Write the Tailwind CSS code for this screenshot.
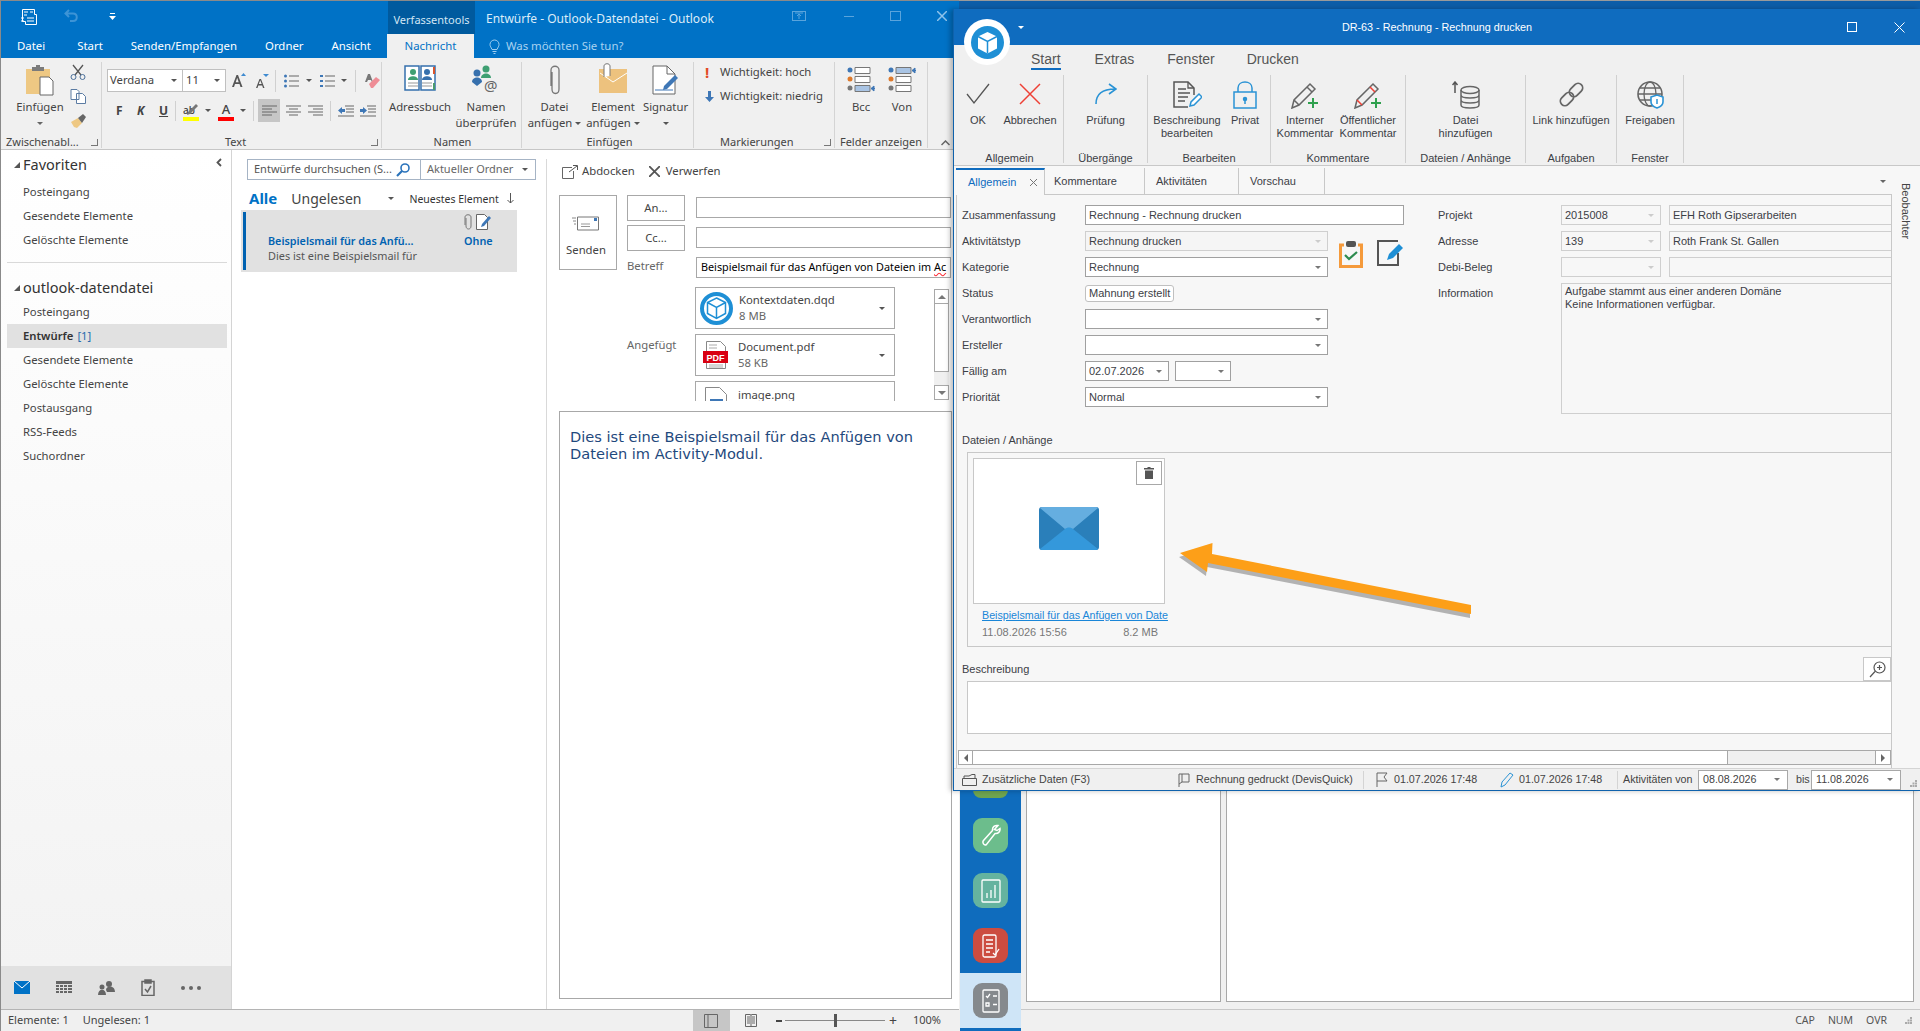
<!DOCTYPE html>
<html lang="de">
<head>
<meta charset="UTF-8">
<title>Entwürfe - Outlook-Datendatei - Outlook</title>
<script src="https://cdn.jsdelivr.net/npm/@tailwindcss/browser@4"></script>
</head>
<body class="bg-[#f0f0f0]">
<div class="relative w-[1920px] h-[1031px] overflow-hidden font-['Noto_Sans',sans-serif]">

<!-- app behind, top edge -->
<div class="absolute left-[955px] top-0 w-[965px] h-[12px] bg-[#0d5da8] border-t border-[#9a9a9a]"></div>

<!-- app behind, lower part -->
<div class="absolute left-[959px] top-[780px] w-[961px] h-[251px] flex bg-[#f0f0f0]">
  <div class="w-[61px] ml-[1px] h-full bg-[#0f6cbd] flex flex-col items-center pt-[18px]">
    <div class="w-[35px] h-[18px] shrink-0 mt-[-18px] mb-[20px] bg-[#6fa54f] rounded-[8px]"></div>
    <div class="w-[35px] h-[35px] shrink-0 rounded-[9px] bg-[#6cbd8c] flex items-center justify-center">
      <svg width="20" height="24" viewBox="0 0 20 24" fill="none" stroke="#fff" stroke-width="1.5"><path d="M17 1.500c-3-.6-6 1.400-5.500 5l-9 10c-1.500 2 .5 5.500 3 4l8.500-11c3 .6 5.500-2 5-5l-3 2-2.500-1z"/></svg>
    </div>
    <div class="w-[35px] h-[35px] shrink-0 mt-[20px] rounded-[9px] bg-[#65b39f] flex items-center justify-center">
      <svg width="20" height="24" viewBox="0 0 20 24" fill="none" stroke="#fff" stroke-width="1.300"><rect x="1" y="1" width="18" height="22" rx="1"/><path d="M6 19v-5M10 19v-8M14 19V6"/></svg>
    </div>
    <div class="w-[35px] h-[35px] shrink-0 mt-[20px] rounded-[9px] bg-[#cc4c40] flex items-center justify-center">
      <svg width="20" height="24" viewBox="0 0 20 24" fill="none" stroke="#fff" stroke-width="1.300"><rect x="2" y="1" width="13" height="22" rx="1.500"/><path d="M5 6h7M5 10h7M5 14h7M5 18h4M12 19l2 2 4-6"/></svg>
    </div>
    <div class="w-[61px] h-[55px] shrink-0 mt-[10px] bg-[#cfe5f7] flex items-center justify-center">
      <div class="w-[35px] h-[35px] rounded-[9px] bg-[#85898d] flex items-center justify-center">
        <svg width="18" height="24" viewBox="0 0 18 24" fill="none" stroke="#fff" stroke-width="1.300"><rect x="1" y="1" width="16" height="22" rx="1"/><path d="M4 7l1.500 1.500L8 5M11 7h4M4 14h3v3H4zM11 15.500h4"/></svg>
      </div>
    </div>
  </div>
  <div class="flex-1 flex flex-col">
    <div class="flex h-[222px] pl-[5px] pr-[6px] gap-[5px]">
      <div class="w-[195px] h-full bg-white border-x border-b border-[#a8a8a8]"></div>
      <div class="flex-1 h-full bg-white border-x border-b border-[#a8a8a8]"></div>
    </div>
    <div class="mt-[7px] flex-1 border-t border-[#c8c8c8] flex items-center justify-end text-[10.500px] text-[#555] pr-[8px] gap-[13px]">
      <span>CAP</span><span>NUM</span><span>OVR</span>
      <svg class="ml-[5px]" width="7" height="7" viewBox="0 0 7 7" fill="#aaa"><path d="M5 0h2v2H5zM2.500 2.500h2v2h-2zM5 2.500h2v2H5zM0 5h2v2H0zM2.500 5h2v2h-2zM5 5h2v2H5z"/></svg>
    </div>
  </div>
</div>

<!-- Outlook window -->
<div class="absolute left-0 top-0 w-[959px] h-[1031px] flex flex-col bg-white border-l border-t border-[#8a8a8a] text-[#444] text-[11.300px]">
  <div class="h-[57px] shrink-0 bg-[#0072c6] text-white flex flex-col">
    <div class="h-[33px] flex items-start">
      <svg class="ml-[19px] mt-[7px]" width="18" height="18" viewBox="0 0 18 18" fill="none" stroke="#fff" stroke-width="1"><path d="M2.500 1.500h12v5h2v10h-11v-3h-3zM4 4h4M4 7h3M10 4h3M7 10h7M7 13h7M1 10h3M1 13h3"/></svg>
      <svg class="ml-[26px] mt-[8px]" width="16" height="14" viewBox="0 0 16 14" fill="none" stroke="#3d94d6" stroke-width="2"><path d="M5 1L1.500 4.500 5 8M2 4.500h7c5 0 5 7.500 0 7.500H6"/></svg>
      <svg class="ml-[29px] mt-[12px]" width="7" height="7" viewBox="0 0 7 7" fill="#fff"><path d="M1 0h5v1H1zM0 3h7L3.500 7z"/></svg>
      <div class="ml-[272px] w-[87px] h-[33px] bg-[#005a9e] text-[#d2e6f5] flex items-center justify-center pt-[5px] whitespace-nowrap text-[11px]">Verfassentools</div>
      <div class="ml-[11px] pt-[9px] text-[12px] text-[#dcecf8] whitespace-nowrap">Entwürfe - Outlook-Datendatei - Outlook</div>
      <div class="ml-auto flex items-start">
        <svg class="mt-[10px]" width="14" height="10" viewBox="0 0 14 10" fill="none" stroke="#5aa4dc"><rect x=".5" y=".5" width="13" height="9"/><path d="M7 8V3M5 5l2-2 2 2M3 2h8"/></svg>
        <div class="ml-[38px] mt-[15px] w-[10px] h-[1px] bg-[#5aa4dc]"></div>
        <div class="ml-[36px] mt-[10px] w-[11px] h-[10px] border border-[#5aa4dc]"></div>
        <svg class="ml-[36px] mr-[12px] mt-[10px]" width="10" height="10" viewBox="0 0 10 10" stroke="#8fc3ea" stroke-width="1.500"><path d="M0 0l10 10M10 0L0 10"/></svg>
      </div>
    </div>
    <div class="h-[24px] flex items-center text-[11.400px] whitespace-nowrap">
      <span class="ml-[16px]">Datei</span>
      <span class="ml-[32px]">Start</span>
      <span class="ml-[28px]">Senden/Empfangen</span>
      <span class="ml-[28px]">Ordner</span>
      <span class="ml-[28px]">Ansicht</span>
      <span class="ml-[16px] w-[87px] h-[24px] bg-[#f0f0f0] text-[#0072c6] flex items-center justify-center">Nachricht</span>
      <svg class="ml-[15px]" width="11" height="15" viewBox="0 0 11 15" fill="none" stroke="#9fcdf0"><path d="M3 10.500C2 8 1 7.500 1 5.500a4.500 4.500 0 019 0c0 2-1 2.500-2 5zM3.500 12.500h4M4.500 14.500h2"/></svg>
      <span class="ml-[6px] text-[#a9d2f1]">Was möchten Sie tun?</span>
    </div>
  </div>

  <!-- ribbon -->
  <div class="h-[92px] shrink-0 bg-[#f0f0f0] border-b border-[#c6c6c6] flex text-[#444] pt-[4px]">
    <div class="w-[101px] h-[86px] border-r border-[#d4d4d4] flex flex-col">
      <div class="h-[74px] flex">
        <div class="w-[62px] ml-[8px] flex flex-col items-center pt-[3px]">
          <svg width="30" height="31" viewBox="0 0 30 31"><rect x="1" y="4" width="24" height="25" fill="#eec883"/><rect x="7" y="2" width="12" height="4" fill="#7b7b7b"/><rect x="11" y="0" width="4" height="3" fill="#7b7b7b"/><path d="M15 12h9l4 4v14H15z" fill="#fff" stroke="#666"/></svg>
          <span class="mt-[3px]">Einfügen</span>
          <span class="mt-[6px] w-0 h-0 border-x-[3px] border-x-transparent border-t-[3px] border-t-[#666]"></span>
        </div>
        <div class="flex flex-col ml-[-1px] pt-[2px] gap-[9px]">
          <svg width="16" height="16" viewBox="0 0 16 16" fill="none" stroke="#4a6f9a"><path d="M3 1l8 10M13 1L5 11" stroke="#555" stroke-width="1.300"/><circle cx="3.500" cy="13" r="2.500"/><circle cx="12.500" cy="13" r="2.500"/></svg>
          <svg width="16" height="15" viewBox="0 0 16 15" fill="#fff" stroke="#5c7ca3"><path d="M1 .5h6l2 2v8H1zM6.500 4.500h6l3 3v7h-9z"/></svg>
          <svg width="17" height="16" viewBox="0 0 17 16"><path d="M1 9l7-4 4 5-5 5-3-1z" fill="#eec883"/><path d="M8 5l5-4 3 3-4 6z" fill="#666"/></svg>
        </div>
      </div>
      <div class="h-[12px] flex items-center justify-between pl-[5px] pr-[3px] text-[11px] whitespace-nowrap"><span>Zwischenabl...</span><span class="w-[7px] h-[7px] border-b border-r border-[#777]"></span></div>
    </div>

    <div class="w-[280px] h-[86px] border-r border-[#d4d4d4] flex flex-col">
      <div class="h-[74px] pt-[7px]">
        <div class="flex items-center h-[23px]">
          <div class="ml-[5px] w-[76px] h-[23px] bg-white border border-[#c0c0c0] flex items-center justify-between px-[2px] pr-[5px]"><span>Verdana</span><span class="w-0 h-0 border-x-[3px] border-x-transparent border-t-[3px] border-t-[#555]"></span></div>
          <div class="w-[43px] h-[23px] bg-white border-y border-r border-[#c0c0c0] flex items-center justify-between px-[3px] pr-[5px]"><span>11</span><span class="w-0 h-0 border-x-[3px] border-x-transparent border-t-[3px] border-t-[#555]"></span></div>
          <svg class="ml-[6px]" width="14" height="15" viewBox="0 0 14 15"><path d="M0 14L4.500 2h1.500L10.500 14H8.500l-1-3H3l-1 3zM3.700 9.300h3L5.200 4.800z" fill="#555"/><path d="M9 3l2.500-3L14 3z" fill="#3e8ad0"/></svg>
          <svg class="ml-[9px]" width="14" height="14" viewBox="0 0 14 14"><path d="M1 14L4.500 5h1.500L9.500 14H8l-.8-2.500H3.300L2.500 14zM3.800 10h2.900L5.200 6.300z" fill="#555"/><path d="M8 0h6l-3 3z" fill="#3e8ad0"/></svg>
          <span class="ml-[6px] w-px h-[22px] bg-[#d0d0d0]"></span>
          <svg class="ml-[8px]" width="15" height="14" viewBox="0 0 15 14"><path d="M5 2h10M5 7h10M5 12h10" stroke="#666"/><circle cx="1.500" cy="2" r="1.500" fill="#3e77b6"/><circle cx="1.500" cy="7" r="1.500" fill="#3e77b6"/><circle cx="1.500" cy="12" r="1.500" fill="#3e77b6"/></svg>
          <span class="ml-[7px] w-0 h-0 border-x-[3px] border-x-transparent border-t-[3px] border-t-[#555]"></span>
          <svg class="ml-[8px]" width="15" height="14" viewBox="0 0 15 14"><path d="M5 2h10M5 7h10M5 12h10" stroke="#666"/><path d="M0 1h3v2H0zM0 6h3v2H0zM0 11h3v2H0z" fill="#3e77b6"/></svg>
          <span class="ml-[6px] w-0 h-0 border-x-[3px] border-x-transparent border-t-[3px] border-t-[#555]"></span>
          <span class="ml-[8px] w-px h-[22px] bg-[#d0d0d0]"></span>
          <svg class="ml-[9px]" width="15" height="16" viewBox="0 0 15 16"><path d="M3 1L0 9h2l1-2h3l1 2h1L5 1z" fill="#777"/><path d="M4 11l7-7 4 3-7 8H6z" fill="#ee8d96"/></svg>
        </div>
        <div class="flex items-center h-[23px] mt-[7px]">
          <span class="ml-[14px] font-bold text-[12px] text-[#444] w-[8px]">F</span>
          <span class="ml-[13px] font-bold italic text-[12px] w-[8px]">K</span>
          <span class="ml-[14px] font-bold underline text-[12px] w-[8px]">U</span>
          <span class="ml-[8px] w-px h-[20px] bg-[#d0d0d0]"></span>
          <div class="relative ml-[7px] w-[16px] h-[20px] flex flex-col justify-end"><span class="text-[10px] leading-[13px] font-medium">ab</span><span class="h-[4px] bg-[#ffff00]"></span><svg class="absolute left-[3px] top-[3px]" width="13" height="12" viewBox="0 0 13 12"><path d="M1 11l3-1 8-8-2-2-8 8z" fill="#777"/></svg></div>
          <span class="ml-[6px] w-0 h-0 border-x-[3px] border-x-transparent border-t-[3px] border-t-[#555]"></span>
          <div class="ml-[7px] w-[16px] h-[20px] flex flex-col justify-end items-center"><span class="text-[13px] leading-[15px] font-medium">A</span><span class="w-[16px] h-[4px] bg-[#ff0000]"></span></div>
          <span class="ml-[6px] w-0 h-0 border-x-[3px] border-x-transparent border-t-[3px] border-t-[#555]"></span>
          <span class="ml-[7px] w-px h-[20px] bg-[#d0d0d0]"></span>
          <div class="ml-[4px] w-[22px] h-[23px] bg-[#c6c6c6] flex items-center justify-center"><svg width="15" height="12" viewBox="0 0 15 12" stroke="#666"><path d="M0 1h15M0 4h10M0 7h15M0 10h10"/></svg></div>
          <svg class="ml-[6px]" width="15" height="12" viewBox="0 0 15 12" stroke="#666"><path d="M0 1h15M3 4h9M0 7h15M3 10h9"/></svg>
          <svg class="ml-[7px]" width="15" height="12" viewBox="0 0 15 12" stroke="#666"><path d="M0 1h15M5 4h10M0 7h15M5 10h10"/></svg>
          <span class="ml-[7px] w-px h-[20px] bg-[#d0d0d0]"></span>
          <svg class="ml-[7px]" width="16" height="12" viewBox="0 0 16 12"><path d="M7 1h9M8 4h8M8 7h8M0 11h16" stroke="#666"/><path d="M0 5.500L4 2v2h3v3H4v2z" fill="#3e77b6"/></svg>
          <svg class="ml-[6px]" width="16" height="12" viewBox="0 0 16 12"><path d="M7 1h9M8 4h8M8 7h8M0 11h16" stroke="#666"/><path d="M7 5.500L3 2v2H0v3h3v2z" fill="#3e77b6"/></svg>
        </div>
      </div>
      <div class="h-[12px] flex items-center text-[11px] justify-between pr-[3px]"><span class="ml-[123px]">Text</span><span class="w-[7px] h-[7px] border-b border-r border-[#777]"></span></div>
    </div>

    <div class="w-[140px] h-[86px] border-r border-[#d4d4d4] flex flex-col">
      <div class="h-[74px] flex">
        <div class="w-[76px] flex flex-col items-center pt-[3px]">
          <svg width="32" height="27" viewBox="0 0 32 27"><path d="M1 1h14v24H1zM17 1h14v24H17z" fill="#fff" stroke="#3670ad" stroke-width="1.500"/><circle cx="9" cy="7" r="3" fill="#3e9f72"/><path d="M4 15c0-5 10-5 10 0z" fill="#3e9f72"/><circle cx="23" cy="7" r="3" fill="#3670ad"/><path d="M18 15c0-5 10-5 10 0z" fill="#3670ad"/><path d="M4 18h10M4 21h10M18 18h10M18 21h10" stroke="#999"/><path d="M29 2h2v7h-2z" fill="#d9542b"/><path d="M29 18h2v7h-2z" fill="#4a9b6e"/></svg>
          <span class="mt-[7px]">Adressbuch</span>
        </div>
        <div class="w-[56px] flex flex-col items-center pt-[3px]">
          <svg width="30" height="30" viewBox="0 0 30 30"><circle cx="6" cy="8" r="3.500" fill="#3670ad"/><path d="M1 17c0-6 10-6 10 0l-5 4z" fill="#3670ad"/><circle cx="15" cy="4" r="3.500" fill="#3e9f72"/><path d="M10 13c0-6 10-6 10 0z" fill="#3e9f72"/><text x="13" y="26" font-size="15" fill="#666" font-family="Noto Sans">@</text></svg>
          <span class="mt-[4px] leading-[16px] text-center">Namen<br>überprüfen</span>
        </div>
      </div>
      <div class="h-[12px] text-center text-[11px] leading-[12px] pl-[2px]">Namen</div>
    </div>

    <div class="w-[172px] h-[86px] border-r border-[#d4d4d4] flex flex-col">
      <div class="h-[74px] flex">
        <div class="w-[65px] flex flex-col items-center pt-[3px]">
          <svg width="12" height="30" viewBox="0 0 12 30" fill="none" stroke="#777" stroke-width="1.300"><path d="M3 7v17c0 6 7 6 7 0V5C10 0 2 0 2 5v16"/></svg>
          <span class="mt-[4px] leading-[16px] text-center whitespace-nowrap">Datei<br>anfügen <span class="inline-block align-middle w-0 h-0 border-x-[3px] border-x-transparent border-t-[3px] border-t-[#555]"></span></span>
        </div>
        <div class="w-[52px] flex flex-col items-center pt-[1px]">
          <svg width="29" height="30" viewBox="0 0 29 30"><rect y="6" width="28" height="24" fill="#edc27e"/><path d="M1 10l13 9 14-9" fill="none" stroke="#fff"/><path d="M5 14V3c0-3 6-3 6 0v10" fill="#fff" stroke="#777"/></svg>
          <span class="mt-[6px] leading-[16px] text-center whitespace-nowrap">Element<br>anfügen <span class="inline-block align-middle w-0 h-0 border-x-[3px] border-x-transparent border-t-[3px] border-t-[#555]"></span></span>
        </div>
        <div class="w-[53px] flex flex-col items-center pt-[3px]">
          <svg width="28" height="30" viewBox="0 0 28 30"><path d="M1 1h14l8 8v20H1z" fill="#fff" stroke="#666"/><path d="M15 1v8h8" fill="none" stroke="#666"/><path d="M12 21l11-11 3 3-11 11-4 1z" fill="#3e77b6"/><path d="M3 25h18" stroke="#3e77b6"/></svg>
          <span class="mt-[4px]">Signatur</span>
          <span class="mt-[6px] w-0 h-0 border-x-[3px] border-x-transparent border-t-[3px] border-t-[#555]"></span>
        </div>
      </div>
      <div class="h-[12px] text-center text-[11px] leading-[12px] pl-[4px]">Einfügen</div>
    </div>

    <div class="w-[141px] h-[86px] border-r border-[#d4d4d4] flex flex-col">
      <div class="h-[74px] pl-[11px]">
        <div class="flex items-center h-[23px] mt-[-1px]"><span class="w-[5px] text-[#e24b26] font-bold text-[15px]">!</span><span class="ml-[10px] whitespace-nowrap">Wichtigkeit: hoch</span></div>
        <div class="flex items-center h-[23px] mt-[1px]"><svg width="9" height="11" viewBox="0 0 9 11" fill="#3e77b6"><path d="M3 0h3v6h3l-4.500 5L0 6h3z"/></svg><span class="ml-[6px] whitespace-nowrap">Wichtigkeit: niedrig</span></div>
      </div>
      <div class="h-[12px] flex items-center text-[11px] justify-between pr-[3px]"><span class="ml-[26px]">Markierungen</span><span class="w-[7px] h-[7px] border-b border-r border-[#777]"></span></div>
    </div>

    <div class="w-[93px] h-[86px] border-r border-[#d4d4d4] flex flex-col">
      <div class="h-[74px] flex">
        <div class="w-[50px] flex flex-col items-center pt-[5px] pl-[2px]">
          <svg width="28" height="25" viewBox="0 0 28 25"><circle cx="3" cy="3" r="2.500" fill="#3e77b6"/><circle cx="3" cy="12" r="2.500" fill="#de7a2c"/><circle cx="3" cy="21" r="2.500" fill="#777"/><path d="M8 .5h15v6H8zM8 9.500h15v6H8z" fill="#fff" stroke="#777"/><path d="M8 18.500h15v6H8z" fill="#a9c4e4" stroke="#777"/><path d="M28 21.500h-4M24 21.500l3-2.500v5z" fill="#3e77b6" stroke="#3e77b6"/></svg>
          <span class="mt-[7px]">Bcc</span>
        </div>
        <div class="w-[34px] flex flex-col items-center pt-[5px]">
          <svg width="28" height="25" viewBox="0 0 28 25"><circle cx="3" cy="3" r="2.500" fill="#3e77b6"/><circle cx="3" cy="12" r="2.500" fill="#de7a2c"/><circle cx="3" cy="21" r="2.500" fill="#777"/><path d="M8 .5h15v6H8z" fill="#a9c4e4" stroke="#777"/><path d="M8 9.500h15v6H8zM8 18.500h15v6H8z" fill="#fff" stroke="#777"/><path d="M28 3.500h-4M24 3.500L27 1v5z" fill="#3e77b6" stroke="#3e77b6"/></svg>
          <span class="mt-[7px]">Von</span>
        </div>
      </div>
      <div class="h-[12px] text-center text-[11px] leading-[12px] whitespace-nowrap">Felder anzeigen</div>
    </div>
    <svg class="ml-[13px] mt-[78px]" width="9" height="6" viewBox="0 0 9 6" fill="none" stroke="#666" stroke-width="1.500"><path d="M.5 5l4-4 4 4"/></svg>
  </div>

  <!-- main -->
  <div class="flex-1 flex min-h-0">
    <div class="w-[231px] shrink-0 border-r border-[#d4d4d4] flex flex-col">
      <div class="flex-1 bg-gradient-to-b from-white to-[#f3f3f3] text-[11.300px] pt-[3px]">
        <div class="h-[24px] flex items-center text-[14.500px] text-[#333]"><span class="ml-[13px] mr-[3px] w-0 h-0 border-l-[6px] border-l-transparent border-b-[6px] border-b-[#555]"></span>Favoriten<svg class="ml-auto mr-[9px] mt-[-6px]" width="6" height="9" viewBox="0 0 6 9" fill="none" stroke="#555" stroke-width="1.800"><path d="M5 1L1.500 4.500 5 8"/></svg></div>
        <div class="h-[24px] mt-[3px] flex items-center pl-[22px]">Posteingang</div>
        <div class="h-[24px] flex items-center pl-[22px]">Gesendete Elemente</div>
        <div class="h-[24px] flex items-center pl-[22px]">Gelöschte Elemente</div>
        <div class="h-px bg-[#d9d9d9] ml-[6px] mr-[4px] mt-[10px]"></div>
        <div class="h-[24px] mt-[13px] flex items-center text-[14.500px] text-[#333]"><span class="ml-[13px] mr-[3px] w-0 h-0 border-l-[6px] border-l-transparent border-b-[6px] border-b-[#555]"></span>outlook-datendatei</div>
        <div class="h-[24px] flex items-center pl-[22px]">Posteingang</div>
        <div class="h-[24px] flex items-center pl-[16px] ml-[6px] mr-[4px] bg-[#e1e1e1]"><b class="font-semibold text-[#333]">Entwürfe</b><span class="ml-[4px] text-[#2a6cad]">[1]</span></div>
        <div class="h-[24px] flex items-center pl-[22px]">Gesendete Elemente</div>
        <div class="h-[24px] flex items-center pl-[22px]">Gelöschte Elemente</div>
        <div class="h-[24px] flex items-center pl-[22px]">Postausgang</div>
        <div class="h-[24px] flex items-center pl-[22px]">RSS-Feeds</div>
        <div class="h-[24px] flex items-center pl-[22px]">Suchordner</div>
      </div>
      <div class="h-[43px] shrink-0 bg-[#e1e1e1] flex items-center">
        <svg class="ml-[13px]" width="16" height="13" viewBox="0 0 16 13"><rect width="16" height="13" fill="#0072c6"/><path d="M0 0l8 7 8-7" fill="none" stroke="#fff"/></svg>
        <svg class="ml-[26px]" width="16" height="14" viewBox="0 0 16 14" fill="#666"><rect width="16" height="3"/><path d="M0 4h3v2H0zM4 4h3v2H4zM8 4h3v2H8zM12 4h4v2h-4zM0 7h3v2H0zM4 7h3v2H4zM8 7h3v2H8zM12 7h4v2h-4zM0 10h3v2H0zM4 10h3v2H4zM8 10h3v2H8zM12 10h4v2h-4z"/></svg>
        <svg class="ml-[26px]" width="17" height="14" viewBox="0 0 17 14" fill="#666"><circle cx="11" cy="3" r="3"/><circle cx="4" cy="6" r="2.500"/><path d="M0 14c0-7 8-7 8 0zM8 9c0-5 9-5 9 2H9z"/></svg>
        <svg class="ml-[26px]" width="14" height="17" viewBox="0 0 14 17" fill="none" stroke="#666" stroke-width="1.500"><path d="M1 2.500h12v14H1z"/><path d="M4 1h6v3H4z" fill="#666"/><path d="M4 10l2.500 3L10 7"/></svg>
        <div class="ml-[26px] flex gap-[4px]"><span class="w-[4px] h-[4px] rounded-full bg-[#666]"></span><span class="w-[4px] h-[4px] rounded-full bg-[#666]"></span><span class="w-[4px] h-[4px] rounded-full bg-[#666]"></span></div>
      </div>
    </div>

    <div class="w-[315px] shrink-0 border-r border-[#d9d9d9] mt-[9px] flex flex-col">
      <div class="ml-[15px] w-[289px] h-[21px] border border-[#a6b4c5] flex items-center">
        <span class="ml-[6px] w-[138px] whitespace-nowrap text-[#555] text-[11px]">Entwürfe durchsuchen (S...</span>
        <svg class="ml-[4px]" width="14" height="14" viewBox="0 0 14 14" fill="none" stroke="#2a73bb" stroke-width="1.600"><circle cx="9" cy="5" r="4"/><path d="M6 8l-5 5" stroke-width="2.200"/></svg>
        <span class="ml-[10px] w-px h-[19px] bg-[#a6b4c5]"></span>
        <span class="ml-[6px] text-[#666] whitespace-nowrap text-[11px]">Aktueller Ordner</span>
        <span class="ml-[9px] w-0 h-0 border-x-[3px] border-x-transparent border-t-[3px] border-t-[#555]"></span>
      </div>
      <div class="h-[28px] mt-[2px] pt-[5px] flex items-center">
        <b class="ml-[17px] text-[15px] font-bold text-[#0072c6]">Alle</b>
        <span class="ml-[14px] text-[14px] text-[#444]">Ungelesen</span>
        <span class="ml-[27px] w-0 h-0 border-x-[3px] border-x-transparent border-t-[3px] border-t-[#555]"></span>
        <span class="ml-[15px] pt-[3px] text-[10.500px] text-[#333] whitespace-nowrap">Neuestes Element</span>
        <svg class="ml-[8px]" width="7" height="11" viewBox="0 0 7 11" fill="none" stroke="#555"><path d="M3.500 0v10M.5 7l3 3 3-3"/></svg>
      </div>
      <div class="ml-[9px] w-[276px] h-[62px] bg-[#e1e1e1] flex py-[2px] pl-[2px]">
        <span class="w-[3px] bg-[#0062b1]"></span>
        <div class="ml-[22px] w-[196px] pt-[21px] leading-[15px]">
          <div class="font-semibold text-[#0062b1] text-[10.800px] whitespace-nowrap">Beispielsmail für das Anfü...</div>
          <div class="text-[#555] text-[10.900px] whitespace-nowrap">Dies ist eine Beispielsmail für</div>
        </div>
        <div class="flex flex-col items-start pt-[2px]">
          <div class="flex items-center gap-[4px]">
            <svg width="8" height="16" viewBox="0 0 8 16" fill="none" stroke="#777"><path d="M2 4v8c0 4 5 4 5 0V3C7 0 1 0 1 3v8"/></svg>
            <svg width="16" height="16" viewBox="0 0 16 16"><path d="M.5.5h8l3 3v12H.5z" fill="#fff" stroke="#666"/><path d="M6 10l7-8 2 2-7 8-3 1z" fill="#3e77b6"/></svg>
          </div>
          <b class="font-semibold text-[#0062b1] text-[10.800px] leading-[15px] mt-[3px]">Ohne</b>
        </div>
      </div>
    </div>

    <div class="flex-1 min-w-0 flex flex-col">
      <div class="h-[45px] shrink-0 flex items-center pb-[2px]">
        <svg class="ml-[15px]" width="16" height="14" viewBox="0 0 16 14" fill="none" stroke="#666"><path d="M10 2.500H.5v11h11V6"/><path d="M7 7l8-6M11 .5h4.500V5" stroke="#555"/></svg>
        <span class="ml-[4px]">Abdocken</span>
        <svg class="ml-[14px]" width="11" height="11" viewBox="0 0 11 11" stroke="#555" stroke-width="1.800"><path d="M0 0l11 11M11 0L0 11"/></svg>
        <span class="ml-[6px]">Verwerfen</span>
      </div>
      <div class="flex pl-[12px] shrink-0">
        <div class="w-[58px] h-[75px] border border-[#a8a8a8] flex flex-col items-center pt-[20px] pr-[4px]">
          <svg width="28" height="15" viewBox="0 0 28 15" fill="none"><path d="M5.500 1h21v13h-21z" fill="#fff" stroke="#777"/><path d="M9 8h9M9 10.500h9" stroke="#999"/><rect x="22" y="2" width="3" height="3" fill="#3e77b6"/><path d="M0 2h4M1 5h3M2 8h2" stroke="#888"/></svg>
          <span class="mt-[11px] text-[#444]">Senden</span>
        </div>
        <div class="ml-[10px] w-[69px]">
          <div class="w-[58px] h-[26px] border border-[#a8a8a8] flex items-center justify-center">An...</div>
          <div class="w-[58px] h-[26px] mt-[4px] border border-[#a8a8a8] flex items-center justify-center">Cc...</div>
          <div class="h-[26px] flex items-center text-[#666] mt-[2px]">Betreff</div>
        </div>
        <div class="w-[255px]">
          <div class="h-[21px] mt-[2px] border border-[#a8a8a8]"></div>
          <div class="h-[21px] mt-[9px] border border-[#a8a8a8]"></div>
          <div class="h-[21px] mt-[9px] border border-[#a8a8a8] flex items-center pl-[4px] whitespace-nowrap text-black text-[10.800px]">Beispielsmail für das Anfügen von Dateien im&nbsp;<span class="underline decoration-wavy decoration-red-500">Ac</span></div>
        </div>
      </div>
      <div class="flex pl-[80px] h-[122px] shrink-0 pt-[8px] mb-[10px]">
        <div class="w-[68px] pt-[50px] text-[#666]">Angefügt</div>
        <div class="w-[200px] h-[114px] flex flex-col gap-[5px] overflow-hidden">
          <div class="h-[42px] shrink-0 border border-[#a8a8a8] flex items-center">
            <svg class="ml-[4px]" width="33" height="33" viewBox="0 0 33 33"><circle cx="16.500" cy="16.500" r="14.500" fill="#fff" stroke="#1e8fd5" stroke-width="4"/><path d="M16.500 6l9 4.500v11l-9 5-9-5v-11zM7.500 10.500l9 5 9-5M16.500 15.500v11" fill="none" stroke="#1e8fd5" stroke-width="1.500"/></svg>
            <div class="ml-[6px] flex-1 leading-[16px]"><div>Kontextdaten.dqd</div><div class="text-[#666]">8 MB</div></div>
            <span class="mr-[9px] w-0 h-0 border-x-[3px] border-x-transparent border-t-[3px] border-t-[#555]"></span>
          </div>
          <div class="h-[42px] shrink-0 border border-[#a8a8a8] flex items-center">
            <svg class="ml-[7px]" width="26" height="28" viewBox="0 0 26 28"><path d="M3.500.5h14l5 5v22h-19z" fill="#fff" stroke="#888"/><path d="M6 24h14M6 26h14M6 4h8M6 7h8" stroke="#aaa"/><rect y="10" width="25" height="12" fill="#d90012"/><text x="12.500" y="19.500" text-anchor="middle" font-size="9" font-weight="700" fill="#fff" font-family="Liberation Sans">PDF</text></svg>
            <div class="ml-[9px] flex-1 leading-[16px]"><div>Document.pdf</div><div class="text-[#666]">58 KB</div></div>
            <span class="mr-[9px] w-0 h-0 border-x-[3px] border-x-transparent border-t-[3px] border-t-[#555]"></span>
          </div>
          <div class="h-[42px] shrink-0 border border-[#a8a8a8] flex items-start pt-[5px]">
            <svg class="ml-[9px]" width="24" height="28" viewBox="0 0 24 28"><path d="M.5.5h14l7 7v20H.5z" fill="#fff" stroke="#888"/><rect x="5" y="12" width="13" height="10" fill="#3e77b6"/></svg>
            <div class="ml-[9px] flex-1 leading-[16px]">image.png</div>
            <span class="mr-[9px] mt-[14px] w-0 h-0 border-x-[3px] border-x-transparent border-t-[3px] border-t-[#555]"></span>
          </div>
        </div>
        <div class="ml-[39px] mt-[2px] w-[15px] h-[111px] flex flex-col bg-[#f0f0f0]">
          <div class="h-[15px] border border-[#a8a8a8] bg-white flex items-center justify-center"><span class="w-0 h-0 border-x-[4px] border-x-transparent border-b-[4px] border-b-[#777]"></span></div>
          <div class="h-[68px] border-x border-b border-[#a8a8a8] bg-white"></div>
          <div class="flex-1"></div>
          <div class="h-[15px] border border-[#a8a8a8] bg-white flex items-center justify-center"><span class="w-0 h-0 border-x-[4px] border-x-transparent border-t-[4px] border-t-[#777]"></span></div>
        </div>
      </div>
      <div class="ml-[12px] mr-[7px] h-[588px] border border-[#a8a8a8] pl-[10px] pt-[16px] font-['DejaVu_Sans',sans-serif] text-[14.600px] leading-[17px] text-[#1f497d] whitespace-nowrap">Dies ist eine Beispielsmail für das Anfügen von<br>Dateien im Activity-Modul.</div>
    </div>
  </div>

  <!-- outlook status bar -->
  <div class="h-[22px] shrink-0 bg-[#f0f0f0] border-t border-[#b4b4b4] flex items-center text-[11px] text-[#444]">
    <span class="ml-[7px]">Elemente: 1</span><span class="ml-[14px]">Ungelesen: 1</span>
    <div class="ml-auto w-[37px] h-[21px] bg-[#c6c6c6] flex items-center justify-center"><svg width="14" height="14" viewBox="0 0 14 14" fill="none" stroke="#666"><path d="M.5.5h13v13H.5zM4 .5v13"/></svg></div>
    <svg class="ml-[15px]" width="12" height="14" viewBox="0 0 12 14" fill="none" stroke="#666"><path d="M.5.5h5l.5 1 .5-1h5v12h-11zM6 1.500v11M2 3h3M2 5h3M2 7h3M2 9h3M7 3h3M7 5h3M7 7h3M7 9h3"/></svg>
    <span class="ml-[19px] w-[6px] h-[2px] bg-[#444]"></span>
    <div class="ml-[3px] w-[100px] h-px bg-[#888] relative"><span class="absolute left-[49px] top-[-6px] w-[3px] h-[13px] bg-[#555]"></span></div>
    <span class="ml-[4px] text-[14px] leading-none">+</span>
    <span class="ml-[16px] mr-[18px]">100%</span>
  </div>
</div>

<!-- Activity window -->
<div class="absolute left-[953px] top-[9px] w-[967px] h-[782px] flex flex-col bg-[#f0f0f0] border-l border-b border-[#0f62ac] shadow-[-3px_0_5px_rgba(0,0,0,0.25)] text-[11px] text-[#3c4046] font-['Liberation_Sans',sans-serif]">
  <div class="h-[36px] shrink-0 bg-[#0f6cbf] text-white flex items-center">
    <span class="flex-1 pl-[73px] text-center whitespace-nowrap text-[10.800px]">DR-63 - Rechnung - Rechnung drucken</span>
    <span class="w-[10px] h-[10px] border border-white"></span>
    <svg class="ml-[37px] mr-[15px]" width="11" height="11" viewBox="0 0 11 11" stroke="#fff"><path d="M.5.5l10 10M10.500.5l-10 10"/></svg>
  </div>
  <!-- logo sits over title and tabs -->
  <div class="absolute left-[10px] top-[10px] w-[46px] h-[46px] rounded-full bg-white flex items-center justify-center">
    <svg width="33" height="33" viewBox="0 0 33 33"><circle cx="16.500" cy="16.500" r="16.500" fill="#1e8fd5"/><path d="M16.500 6l9.500 4.500v12l-9.500 5-9.500-5v-12z" fill="#fff"/><path d="M7 10.500l9.500 5 9.500-5M16.500 15.500v12" fill="none" stroke="#1e8fd5" stroke-width="1.500"/></svg>
  </div>
  <span class="absolute left-[64px] top-[17px] w-0 h-0 border-x-[3px] border-x-transparent border-t-[3px] border-t-white"></span>

  <div class="h-[30px] shrink-0 flex items-start pt-[5px] text-[14px] text-[#555]">
    <span class="ml-[77px] h-[20px] leading-[18px] border-b-[2px] border-[#0f6cbf]">Start</span>
    <span class="ml-[34px] leading-[18px]">Extras</span>
    <span class="ml-[33px] leading-[18px]">Fenster</span>
    <span class="ml-[32px] leading-[18px]">Drucken</span>
  </div>

  <div class="h-[91px] shrink-0 flex border-b border-[#c8c8c8] pl-[2px]">
    <div class="w-[108px] h-[88px] border-r border-[#d0d0d0] flex flex-col">
      <div class="flex-1 flex">
        <div class="w-[44px] flex flex-col items-center pt-[8px]"><svg width="24" height="22" viewBox="0 0 24 22" fill="none" stroke="#555" stroke-width="1.300"><path d="M1 11l7 9L23 1"/></svg><span class="mt-[9px] leading-[13px]">OK</span></div>
        <div class="w-[60px] flex flex-col items-center pt-[8px]"><svg width="22" height="22" viewBox="0 0 22 22" stroke="#ee4036" stroke-width="1.500"><path d="M1 1l20 20M21 1L1 21"/></svg><span class="mt-[9px] leading-[13px]">Abbrechen</span></div>
      </div>
      <div class="h-[10px] text-center leading-[10px]">Allgemein</div>
    </div>
    <div class="w-[84px] h-[88px] border-r border-[#d0d0d0] flex flex-col">
      <div class="flex-1 flex flex-col items-center pt-[8px]"><svg width="22" height="22" viewBox="0 0 22 22" fill="none" stroke="#2a93d5" stroke-width="1.600"><path d="M1 21C1 11 7 6 20 6M14 1l7 5-7 5"/></svg><span class="mt-[9px] leading-[13px]">Prüfung</span></div>
      <div class="h-[10px] text-center leading-[10px]">Übergänge</div>
    </div>
    <div class="w-[123px] h-[88px] border-r border-[#d0d0d0] flex flex-col">
      <div class="flex-1 flex">
        <div class="w-[78px] flex flex-col items-center pt-[6px]"><svg width="29" height="28" viewBox="0 0 29 28" fill="none"><path d="M21 14V7l-6-6H1v25h14" stroke="#555" stroke-width="1.500"/><path d="M15 1v6h6M5 8h8M5 12h12M5 16h10M5 20h7" stroke="#555" stroke-width="1.300"/><path d="M17 25l1-4 8-8 3 3-8 8z" fill="#fff" stroke="#2a93d5" stroke-width="1.500"/></svg><span class="mt-[5px] text-center leading-[13px]">Beschreibung<br>bearbeiten</span></div>
        <div class="w-[38px] flex flex-col items-center pt-[6px]"><svg width="24" height="28" viewBox="0 0 24 28" fill="none" stroke="#2a93d5" stroke-width="1.500"><rect x="1" y="11" width="22" height="16"/><path d="M5 11V7c0-8 14-8 14 0v4"/><circle cx="12" cy="18" r="1.500" fill="#2a93d5"/><path d="M12 19v4"/></svg><span class="mt-[5px] leading-[13px]">Privat</span></div>
      </div>
      <div class="h-[10px] text-center leading-[10px]">Bearbeiten</div>
    </div>
    <div class="w-[135px] h-[88px] border-r border-[#d0d0d0] flex flex-col">
      <div class="flex-1 flex pl-[3px]">
        <div class="w-[62px] flex flex-col items-center pt-[6px]"><svg width="28" height="28" viewBox="0 0 28 28" fill="none"><path d="M1 27l2-8L19 3l5 5L8 24zM3 19l5 5M16 6l5 5" stroke="#666" stroke-width="1.500"/><path d="M22 17v10M17 22h10" stroke="#2fa04e" stroke-width="2"/></svg><span class="mt-[5px] text-center leading-[13px]">Interner<br>Kommentar</span></div>
        <div class="w-[64px] flex flex-col items-center pt-[6px]"><svg width="28" height="28" viewBox="0 0 28 28" fill="none"><path d="M1 27l2-8L19 3l5 5L8 24z" stroke="#666" stroke-width="1.500"/><path d="M3 19l5 5M16 6l5 5" stroke="#ee4036" stroke-width="1.500"/><path d="M22 17v10M17 22h10" stroke="#2fa04e" stroke-width="2"/></svg><span class="mt-[5px] text-center leading-[13px]">Öffentlicher<br>Kommentar</span></div>
      </div>
      <div class="h-[10px] text-center leading-[10px]">Kommentare</div>
    </div>
    <div class="w-[120px] h-[88px] border-r border-[#d0d0d0] flex flex-col">
      <div class="flex-1 flex flex-col items-center pt-[6px]"><svg width="28" height="28" viewBox="0 0 28 28" fill="none" stroke="#666" stroke-width="1.500"><ellipse cx="18" cy="9" rx="9" ry="3.500"/><path d="M9 9v15c0 4 18 4 18 0V9M9 14c0 4 18 4 18 0M9 19c0 4 18 4 18 0"/><path d="M3 12V1M.5 4L3 1l2.500 3" stroke="#555"/></svg><span class="mt-[5px] text-center leading-[13px]">Datei<br>hinzufügen</span></div>
      <div class="h-[10px] text-center leading-[10px] whitespace-nowrap">Dateien / Anhänge</div>
    </div>
    <div class="w-[91px] h-[88px] border-r border-[#d0d0d0] flex flex-col">
      <div class="flex-1 flex flex-col items-center pt-[6px]"><svg width="27" height="27" viewBox="0 0 27 27" fill="none" stroke="#666" stroke-width="1.800"><rect x="10.500" y="4.500" width="15" height="9" rx="4.500" transform="rotate(-45 18 9)"/><rect x="1.500" y="13.500" width="15" height="9" rx="4.500" transform="rotate(-45 9 18)"/></svg><span class="mt-[6px] leading-[13px] whitespace-nowrap">Link hinzufügen</span></div>
      <div class="h-[10px] text-center leading-[10px]">Aufgaben</div>
    </div>
    <div class="w-[67px] h-[88px] border-r border-[#d0d0d0] flex flex-col">
      <div class="flex-1 flex flex-col items-center pt-[6px]"><svg width="27" height="28" viewBox="0 0 27 28" fill="none"><circle cx="13" cy="13" r="12" stroke="#666" stroke-width="1.600"/><ellipse cx="13" cy="13" rx="6" ry="12" stroke="#666" stroke-width="1.300"/><path d="M1 13h24M3 7h20M3 19h20" stroke="#666" stroke-width="1.300"/><path d="M14 16l6-2 6 2v5c0 3-3 5-6 6-3-1-6-3-6-6z" fill="#fff" stroke="#2a93d5" stroke-width="1.600"/><path d="M20 18v5" stroke="#2a93d5" stroke-width="1.500"/></svg><span class="mt-[5px] leading-[13px]">Freigaben</span></div>
      <div class="h-[10px] text-center leading-[10px]">Fenster</div>
    </div>
  </div>

  <!-- tab strip -->
  <div class="h-[29px] shrink-0 bg-[#f7f7f7] flex items-end">
    <div class="ml-[2px] w-[89px] h-[27px] border-t-[2px] border-[#0f6cbf] border-r border-r-[#c8c8c8] flex items-center text-[#0f6cbf]"><span class="ml-[12px] w-[49px]">Allgemein</span><svg class="ml-[13px]" width="7" height="7" viewBox="0 0 7 7" stroke="#777"><path d="M0 0l7 7M7 0L0 7"/></svg></div>
    <div class="w-[100px] h-[27px] flex items-center border-r border-[#c8c8c8] border-b"><span class="ml-[9px]">Kommentare</span></div>
    <div class="w-[94px] h-[27px] flex items-center border-r border-[#c8c8c8] border-b"><span class="ml-[11px]">Aktivitäten</span></div>
    <div class="w-[86px] h-[27px] flex items-center border-r border-[#c8c8c8] border-b"><span class="ml-[11px]">Vorschau</span></div>
    <div class="w-[567px] h-[27px] border-b border-[#c8c8c8] flex items-center justify-end pr-[6px]"><span class="w-0 h-0 border-x-[3px] border-x-transparent border-t-[3px] border-t-[#666]"></span></div>
  </div>

  <!-- pane -->
  <div class="flex-1 min-h-0 flex bg-[#f7f7f7]">
    <div class="ml-[2px] w-[936px] border-l border-r border-[#c8c8c8] flex flex-col">
      <div class="flex h-[237px] shrink-0 pl-[5px] pt-[10px]">
        <div class="w-[442px] shrink-0">
          <div class="flex items-center h-[20px] mb-[6px]"><span class="w-[123px]">Zusammenfassung</span><div class="w-[319px] h-[20px] bg-white border border-[#a0a0a0] px-[3px] leading-[18px]">Rechnung - Rechnung drucken</div></div>
          <div class="flex items-center h-[20px] mb-[6px]"><span class="w-[123px]">Aktivitätstyp</span><div class="w-[243px] h-[20px] bg-[#f5f5f5] border border-[#cfcfcf] px-[3px] flex items-center justify-between"><span>Rechnung drucken</span><span class="mr-[3px] w-0 h-0 border-x-[3px] border-x-transparent border-t-[3px] border-t-[#ccc]"></span></div>
            <svg class="ml-[11px] mt-[25px]" width="24" height="28" viewBox="0 0 24 28" fill="none"><path d="M5 5H1.500v21.500h21V5H19" stroke="#f59a3b" stroke-width="3"/><rect x="7" y="1" width="10" height="6" rx="2" fill="#555"/><path d="M6 15l4 4 8-7" stroke="#2e8b4f" stroke-width="2.200"/></svg>
            <svg class="ml-[14px] mt-[25px]" width="27" height="27" viewBox="0 0 27 27" fill="none"><path d="M21 13v12H1V1h20" stroke="#555" stroke-width="2"/><path d="M10 20l2-6 10-10 4 4-10 10z" fill="#1e8fd5"/></svg>
          </div>
          <div class="flex items-center h-[20px] mb-[6px]"><span class="w-[123px]">Kategorie</span><div class="w-[243px] h-[20px] bg-white border border-[#a0a0a0] px-[3px] flex items-center justify-between"><span>Rechnung</span><span class="mr-[3px] w-0 h-0 border-x-[3px] border-x-transparent border-t-[3px] border-t-[#777]"></span></div></div>
          <div class="flex items-center h-[20px] mb-[6px]"><span class="w-[123px]">Status</span><div class="h-[17px] bg-white border border-[#c0c0c0] rounded-[3px] px-[3px] leading-[15px]">Mahnung erstellt</div></div>
          <div class="flex items-center h-[20px] mb-[6px]"><span class="w-[123px]">Verantwortlich</span><div class="w-[243px] h-[20px] bg-white border border-[#a0a0a0] px-[3px] flex items-center justify-end"><span class="mr-[3px] w-0 h-0 border-x-[3px] border-x-transparent border-t-[3px] border-t-[#777]"></span></div></div>
          <div class="flex items-center h-[20px] mb-[6px]"><span class="w-[123px]">Ersteller</span><div class="w-[243px] h-[20px] bg-white border border-[#a0a0a0] px-[3px] flex items-center justify-end"><span class="mr-[3px] w-0 h-0 border-x-[3px] border-x-transparent border-t-[3px] border-t-[#777]"></span></div></div>
          <div class="flex items-center h-[20px] mb-[6px]"><span class="w-[123px]">Fällig am</span><div class="w-[84px] h-[20px] bg-white border border-[#a0a0a0] px-[3px] flex items-center justify-between"><span>02.07.2026</span><span class="mr-[3px] w-0 h-0 border-x-[3px] border-x-transparent border-t-[3px] border-t-[#777]"></span></div><div class="ml-[6px] w-[56px] h-[20px] bg-white border border-[#a0a0a0] px-[3px] flex items-center justify-end"><span class="mr-[3px] w-0 h-0 border-x-[3px] border-x-transparent border-t-[3px] border-t-[#777]"></span></div></div>
          <div class="flex items-center h-[20px]"><span class="w-[123px]">Priorität</span><div class="w-[243px] h-[20px] bg-white border border-[#a0a0a0] px-[3px] flex items-center justify-between"><span>Normal</span><span class="mr-[3px] w-0 h-0 border-x-[3px] border-x-transparent border-t-[3px] border-t-[#777]"></span></div></div>
        </div>
        <div class="ml-[34px] flex-1 min-w-0 overflow-hidden">
          <div class="flex items-center h-[20px] mb-[6px]"><span class="w-[123px] shrink-0">Projekt</span><div class="w-[100px] shrink-0 h-[20px] border border-[#cfcfcf] bg-[#f7f7f7] px-[3px] flex items-center justify-between"><span>2015008</span><span class="mr-[3px] w-0 h-0 border-x-[3px] border-x-transparent border-t-[3px] border-t-[#ccc]"></span></div><div class="ml-[8px] w-[240px] shrink-0 h-[20px] border border-[#cfcfcf] bg-[#f7f7f7] px-[3px] leading-[18px]">EFH Roth Gipserarbeiten</div></div>
          <div class="flex items-center h-[20px] mb-[6px]"><span class="w-[123px] shrink-0">Adresse</span><div class="w-[100px] shrink-0 h-[20px] border border-[#cfcfcf] bg-[#f7f7f7] px-[3px] flex items-center justify-between"><span>139</span><span class="mr-[3px] w-0 h-0 border-x-[3px] border-x-transparent border-t-[3px] border-t-[#ccc]"></span></div><div class="ml-[8px] w-[240px] shrink-0 h-[20px] border border-[#cfcfcf] bg-[#f7f7f7] px-[3px] leading-[18px]">Roth Frank St. Gallen</div></div>
          <div class="flex items-center h-[20px] mb-[6px]"><span class="w-[123px] shrink-0">Debi-Beleg</span><div class="w-[100px] shrink-0 h-[20px] border border-[#cfcfcf] bg-[#f7f7f7] px-[3px] flex items-center justify-end"><span class="mr-[3px] w-0 h-0 border-x-[3px] border-x-transparent border-t-[3px] border-t-[#ccc]"></span></div><div class="ml-[8px] w-[240px] shrink-0 h-[20px] border border-[#cfcfcf] bg-[#f7f7f7]"></div></div>
          <div class="flex items-start"><span class="w-[123px] shrink-0 leading-[20px]">Information</span><div class="w-[340px] shrink-0 h-[131px] border border-[#cfcfcf] bg-[#f7f7f7] px-[3px] pt-[1px] leading-[13px]">Aufgabe stammt aus einer anderen Domäne<br>Keine Informationen verfügbar.</div></div>
        </div>
      </div>
      <div class="h-[16px] shrink-0 pl-[5px] leading-[16px]">Dateien / Anhänge</div>
      <div class="ml-[10px] mt-[4px] h-[195px] shrink-0 border-y border-l border-[#c8c8c8] pl-[5px] pt-[5px]">
        <div class="relative w-[192px] h-[146px] bg-white border border-[#c8c8c8] flex items-center justify-center">
          <button class="absolute right-[2px] top-[2px] w-[26px] h-[24px] bg-white border border-[#a8a8a8] flex items-center justify-center"><svg width="10" height="12" viewBox="0 0 10 12" fill="#555"><path d="M3.500 0h3v1H10v1.500H0V1h3.500zM1 3.500h8V12H1z"/></svg></button>
          <svg class="mt-[-5px]" width="60" height="43" viewBox="0 0 60 43"><rect width="60" height="43" rx="3" fill="#2a7fba"/><path d="M3 0h54a3 3 0 012 1L34 22c-2 2-6 2-8 0L1 1a3 3 0 012-1z" fill="#65aee0"/><path d="M3 43h54a3 3 0 002-1L34 22c-2-2-6-2-8 0L1 42a3 3 0 002 1z" fill="#3498db"/></svg>
        </div>
        <div class="ml-[9px] mt-[3px] whitespace-nowrap text-[#1a86d8] underline text-[10.700px] leading-[16px]">Beispielsmail für das Anfügen von Date</div>
        <div class="ml-[9px] mt-[1px] w-[176px] flex justify-between text-[#777] leading-[16px]"><span>11.08.2026 15:56</span><span>8.2 MB</span></div>
      </div>
      <div class="h-[34px] shrink-0 flex items-center justify-between pl-[5px] pt-[10px]">
        <span>Beschreibung</span>
        <div class="w-[28px] h-[24px] bg-white border border-[#c8c8c8] flex items-center justify-center"><svg width="17" height="17" viewBox="0 0 17 17" fill="none" stroke="#555" stroke-width="1.200"><circle cx="10.500" cy="6.500" r="5.500"/><path d="M6 10.500L1 16M8 6.500h5M10.500 4v5"/></svg></div>
      </div>
      <div class="ml-[10px] h-[53px] shrink-0 bg-white border-y border-l border-[#c8c8c8]"></div>
      <div class="mt-[16px] ml-[1px] h-[15px] shrink-0 flex items-stretch border-y border-[#a8a8a8] bg-[#f0f0f0]">
        <div class="w-[15px] bg-white border-x border-[#a8a8a8] flex items-center justify-center"><span class="w-0 h-0 border-y-[4px] border-y-transparent border-r-[4px] border-r-[#666]"></span></div>
        <div class="w-[755px] bg-white border-r border-[#a8a8a8]"></div>
        <div class="flex-1"></div>
        <div class="w-[16px] bg-white border-x border-[#a8a8a8] flex items-center justify-center"><span class="w-0 h-0 border-y-[4px] border-y-transparent border-l-[4px] border-l-[#666]"></span></div>
      </div>
    </div>
    <div class="flex-1 flex justify-center"><span class="[writing-mode:vertical-rl] mt-[-12px] h-[60px] text-[#444] whitespace-nowrap">Beobachter</span></div>
  </div>

  <!-- activity status bar -->
  <div class="h-[22px] shrink-0 bg-[#f0f0f0] border-t border-[#d4d4d4] flex items-center text-[#444] text-[10.700px] whitespace-nowrap">
    <svg class="ml-[8px] shrink-0" width="15" height="12" viewBox="0 0 15 12" fill="none" stroke="#555"><path d="M.5 11.500v-7h14v7zM2 4.500V2h5l3-1.500h3v4"/></svg>
    <span class="ml-[5px] w-[196px]">Zusätzliche Daten (F3)</span>
    <svg class="shrink-0" width="12" height="14" viewBox="0 0 12 14" fill="none" stroke="#666"><path d="M1 14V1h10v8H4L1 11M4 1v8"/></svg>
    <span class="ml-[6px] w-[167px]">Rechnung gedruckt (DevisQuick)</span>
    <span class="w-px h-[18px] bg-[#d4d4d4]"></span>
    <svg class="ml-[12px] shrink-0" width="12" height="15" viewBox="0 0 12 15" fill="none" stroke="#666"><path d="M1 15V1h10L8 5l3 4H1"/></svg>
    <span class="ml-[6px] w-[92px]">01.07.2026 17:48</span>
    <svg class="ml-[14px] shrink-0" width="14" height="16" viewBox="0 0 14 16" fill="none" stroke="#2a93d5"><path d="M1 15l1-5 8-9 3 2-8 10z"/></svg>
    <span class="ml-[5px] w-[92px]">01.07.2026 17:48</span>
    <span class="ml-[6px] w-px h-[18px] bg-[#d4d4d4]"></span>
    <span class="ml-[5px] w-[75px]">Aktivitäten von</span>
    <div class="w-[90px] h-[20px] bg-white border border-[#a8a8a8] px-[4px] flex items-center justify-between"><span>08.08.2026</span><span class="mr-[3px] w-0 h-0 border-x-[3px] border-x-transparent border-t-[3px] border-t-[#777]"></span></div>
    <span class="ml-[8px] w-[15px]">bis</span>
    <div class="w-[90px] h-[20px] bg-white border border-[#a8a8a8] px-[4px] flex items-center justify-between"><span>11.08.2026</span><span class="mr-[3px] w-0 h-0 border-x-[3px] border-x-transparent border-t-[3px] border-t-[#777]"></span></div>
    <svg class="ml-[9px] mt-[8px]" width="7" height="7" viewBox="0 0 7 7" fill="#aaa"><path d="M5 0h2v2H5zM2.500 2.500h2v2h-2zM5 2.500h2v2H5zM0 5h2v2H0zM2.500 5h2v2h-2zM5 5h2v2H5z"/></svg>
  </div>
</div>

<!-- annotation arrow -->
<svg class="absolute left-[1170px] top-[535px]" width="320" height="95" viewBox="0 0 320 95">
  <path d="M10 18L42.500 8 41 19l260 51v9L38 28l-1 9z" fill="#000" opacity=".28" transform="translate(-1 4)"/>
  <path d="M10 18L42.500 8 42 19l259 51v9L38 28l-1 9z" fill="#fd9f18"/>
</svg>

</div>
</body>
</html>
